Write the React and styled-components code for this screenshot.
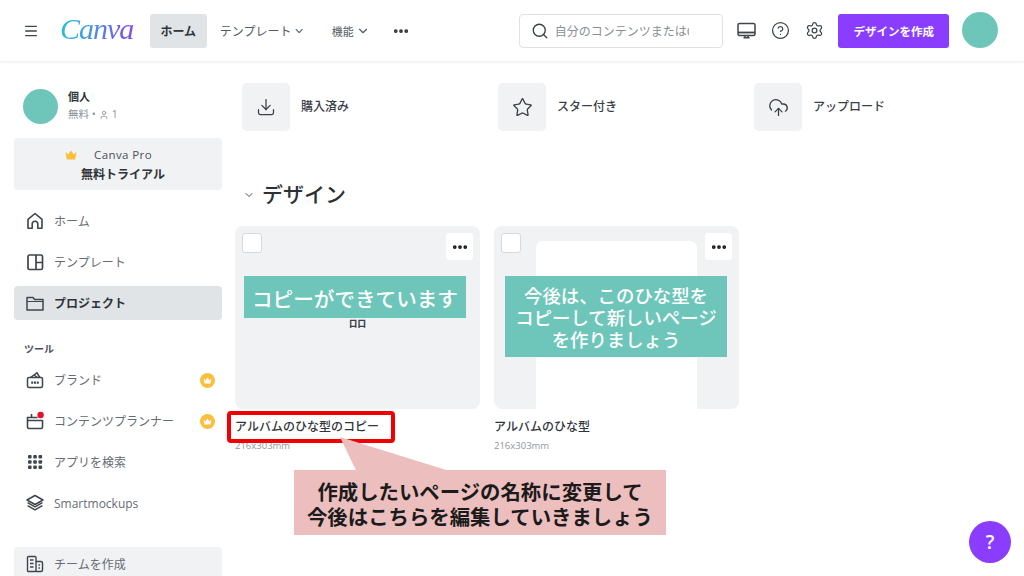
import React from "react";
import styled, { createGlobalStyle } from "styled-components";
import {
  ChevronDown,
  CircleHelp,
  CloudUpload,
  Download,
  Ellipsis,
  Menu,
  Search,
  Settings,
  Star,
  User,
} from "lucide-react";

const GlobalStyle = createGlobalStyle`
  html, body {
    margin: 0;
    height: 100%;
    overflow: hidden;
    background: #ffffff;
  }
  body {
    font-family: "Open Sans", "Noto Sans CJK JP", sans-serif;
    color: #3a4048;
  }
  * {
    box-sizing: border-box;
  }
`;

const Page = styled.div`
  position: relative;
  width: 1024px;
  height: 576px;
  overflow: hidden;
`;

const Header = styled.header`
  display: flex;
  align-items: center;
  height: 61px;
  padding: 0 26px 0 23px;
  box-shadow: 0 1px 3px rgba(30, 40, 60, 0.1);
`;

const IconButton = styled.span`
  display: flex;
  color: #3f454d;
`;

const Logo = styled.span`
  margin: -3px 0 0 21px;
  width: 90px;
  font-family: "Liberation Serif", serif;
  font-style: italic;
  font-size: 30px;
  line-height: 40px;
  letter-spacing: -1px;
  background: linear-gradient(100deg, #1fc4d4 0%, #3f9fe0 30%, #7d4df0 75%);
  -webkit-background-clip: text;
  background-clip: text;
  color: transparent;
`;

const TopLink = styled.span`
  display: flex;
  align-items: center;
  justify-content: ${(p) => (p.$start ? "flex-start" : "center")};
  gap: 2px;
  height: 34px;
  flex: none;
  font-size: ${(p) => p.$size || 12}px;
  color: #555b63;
  margin-right: ${(p) => p.$after || 0}px;
  width: ${(p) => p.$width}px;
  white-space: nowrap;
`;

const ActiveLink = styled(TopLink)`
  background: #e1e4e7;
  border-radius: 3px;
  color: #2f343a;
  font-weight: 700;
`;

const SearchBox = styled.div`
  display: flex;
  align-items: center;
  gap: 6px;
  width: 205px;
  height: 34px;
  margin-left: 109px;
  padding: 0 0 0 11px;
  border: 1px solid #dfe1e4;
  border-radius: 4px;
  font-size: 12px;
  color: #8a9097;
  overflow: hidden;
  white-space: nowrap;

  svg {
    flex: none;
    color: #3a4048;
  }
`;

const SearchText = styled.span`
  display: block;
  width: 134px;
  overflow: hidden;
`;

const HeaderIcons = styled.div`
  display: flex;
  align-items: center;
  gap: 15px;
  margin: 0 14px 0 14px;
  color: #3f454d;
`;

const CreateButton = styled.span`
  display: flex;
  align-items: center;
  justify-content: center;
  width: 111px;
  height: 34px;
  border-radius: 3px;
  background: #8b3dff;
  color: #ffffff;
  font-size: 11.5px;
  font-weight: 700;
`;

const Avatar = styled.span`
  display: block;
  flex: none;
  width: ${(p) => p.$size}px;
  height: ${(p) => p.$size}px;
  border-radius: 50%;
  background: #6ec6bb;
`;

const HeaderAvatar = styled(Avatar)`
  margin: -2px 0 0 13px;
`;

const Body = styled.div`
  display: flex;
`;

const Sidebar = styled.aside`
  flex: none;
  width: 235px;
  padding: 28px 13px 0 14px;
`;

const Profile = styled.div`
  display: flex;
  align-items: center;
  gap: 10px;
  padding-left: 9px;
  height: 35px;
`;

const ProfileName = styled.div`
  font-size: 11px;
  line-height: 16px;
  font-weight: 700;
  color: #2f343a;
`;

const ProfileMeta = styled.div`
  display: flex;
  align-items: center;
  gap: 3px;
  font-size: 10.5px;
  line-height: 19px;
  color: #8a9097;
`;

const ProBox = styled.div`
  height: 52px;
  margin: 14px 0;
  padding-top: 8px;
  border-radius: 4px;
  background: #f1f2f4;
  text-align: center;
`;

const ProRow = styled.div`
  display: flex;
  align-items: center;
  gap: 17px;
  padding-left: 51px;
  font-size: 11.5px;
  line-height: 18px;
  letter-spacing: 0.4px;
  color: #4a5058;
`;

const ProCta = styled.div`
  padding-left: 10px;
  font-size: 12px;
  line-height: 22px;
  font-weight: 700;
  color: #2f343a;
`;

const NavList = styled.nav`
  display: flex;
  flex-direction: column;
  gap: 7px;
`;

const NavItem = styled.div`
  display: flex;
  align-items: center;
  gap: 9px;
  height: 34px;
  padding: 0 7px 0 11px;
  border-radius: 4px;
  font-size: 12px;
  font-weight: ${(p) => (p.$active ? 700 : 400)};
  color: ${(p) => (p.$active ? "#2f343a" : "#666c74")};
  background: ${(p) => (p.$active ? "#e1e4e7" : p.$soft ? "#f1f2f4" : "transparent")};

  svg {
    flex: none;
    color: #3f454d;
  }
`;

const NavLabel = styled.span`
  flex: 1;
`;

const ToolsTitle = styled.div`
  margin: 21px 0 6px 10px;
  font-size: 10px;
  line-height: 16px;
  font-weight: 700;
  color: #4a5058;
`;

const TeamItem = styled(NavItem)`
  margin-top: 27px;
`;

const Main = styled.main`
  flex: 1;
  padding-top: 22px;
`;

const Shortcuts = styled.div`
  display: grid;
  grid-template-columns: repeat(3, 256px);
  padding-left: 7px;
`;

const Shortcut = styled.div`
  display: flex;
  align-items: center;
  gap: 11px;
  font-size: 12px;
  line-height: 46px;
  font-weight: 500;
  color: #3a4048;
`;

const ShortcutTile = styled.span`
  display: flex;
  align-items: center;
  justify-content: center;
  width: 48px;
  height: 48px;
  border-radius: 5px;
  background: #f1f2f4;
  color: #3a4048;
`;

const SectionTitle = styled.h2`
  display: flex;
  align-items: center;
  gap: 7px;
  height: 30px;
  margin: 47px 0 18px 8px;
  font-size: 21px;
  font-weight: 500;
  color: #2c3137;

  svg {
    margin-top: 4px;
    color: #4a5058;
  }
`;

const Cards = styled.div`
  display: flex;
  gap: 14px;
`;

const Card = styled.article`
  width: 245px;
`;

const Thumb = styled.div`
  position: relative;
  display: flex;
  justify-content: center;
  height: 183px;
  border-radius: 8px;
  background: #f1f2f4;
  overflow: hidden;
`;

const Glyph = styled.div`
  align-self: center;
  font-size: 18px;
  color: #3a4048;
`;

const Sheet = styled.div`
  align-self: flex-end;
  width: 161px;
  height: 168px;
  border-radius: 7px 7px 0 0;
  background: #ffffff;
`;

const Check = styled.span`
  position: absolute;
  top: 7px;
  left: 7px;
  width: 20px;
  height: 20px;
  border: 1px solid #d5d8dc;
  border-radius: 3px;
  background: #ffffff;
`;

const CardMenu = styled.span`
  position: absolute;
  top: 7px;
  right: 7px;
  display: flex;
  align-items: center;
  justify-content: center;
  width: 27px;
  height: 27px;
  border-radius: 3px;
  background: #ffffff;
  color: #111418;
`;

const Note = styled.div`
  position: absolute;
  top: 50px;
  left: ${(p) => p.$left}px;
  width: 222px;
  padding: ${(p) => p.$pad};
  background: #6ec6bb;
  color: #ffffff;
  font-size: ${(p) => p.$size}px;
  line-height: ${(p) => p.$line}px;
  font-weight: 500;
  text-align: center;
  white-space: nowrap;
`;

const CardName = styled.div`
  position: relative;
  margin-top: 9px;
  font-size: 12px;
  line-height: 18px;
  font-weight: 500;
  color: #2f343a;
  white-space: nowrap;
`;

const CardSize = styled.div`
  margin-top: 3px;
  font-size: 9.5px;
  line-height: 13px;
  color: #92979e;
`;

const RedFrame = styled.span`
  position: absolute;
  top: -7px;
  left: -8px;
  width: 168px;
  height: 32px;
  border: 4px solid #f20000;
  border-radius: 4px;
`;

const CalloutTail = styled.svg`
  position: absolute;
  left: 336px;
  top: 436px;
`;

const Callout = styled.div`
  position: absolute;
  left: 294px;
  top: 470px;
  width: 372px;
  height: 65px;
  padding-top: 10px;
  background: #ecbfbe;
  color: #1b1b1b;
  font-size: 20.4px;
  line-height: 25px;
  font-weight: 700;
  text-align: center;
  white-space: nowrap;
`;

const HelpBubble = styled.span`
  position: absolute;
  left: 969px;
  top: 521px;
  display: flex;
  align-items: center;
  justify-content: center;
  width: 42px;
  height: 42px;
  border-radius: 50%;
  background: #8b3dff;
  color: #ffffff;
  font-size: 19px;
  font-weight: 600;
`;

const HomeIcon = () => (
  <svg width="20" height="20" viewBox="0 0 20 20" fill="none" stroke="currentColor" strokeWidth="1.6" strokeLinejoin="round">
    <path d="M10 2.5 3 8.4V17.2H7.2V13a2.8 2.8 0 0 1 5.6 0V17.2H17V8.4Z" />
  </svg>
);

const TemplateIcon = () => (
  <svg width="20" height="20" viewBox="0 0 20 20" fill="none" stroke="currentColor" strokeWidth="1.7">
    <rect x="3" y="3" width="14.5" height="14.5" rx="1.5" />
    <path d="M11 3v14.5M11 10.5h6.5" />
  </svg>
);

const FolderIcon = () => (
  <svg width="20" height="20" viewBox="0 0 20 20" fill="none" stroke="currentColor" strokeWidth="1.5" strokeLinejoin="round">
    <path d="M2 4.5h6l1.6 2H18v10.5H2Z" />
    <path d="M2 8.5h16" strokeWidth="1" />
  </svg>
);

const BrandIcon = () => (
  <svg width="20" height="20" viewBox="0 0 20 20" fill="none" stroke="currentColor" strokeWidth="1.5">
    <rect x="2.5" y="7.5" width="15" height="10" rx="1.5" />
    <path d="M5.5 7.5 12 2.8l2.8 4.7M9 5l3.5 2.5" />
    <path d="M6.2 12.6h7.6" strokeWidth="2.2" strokeDasharray="2 0.8" />
  </svg>
);

const PlannerIcon = () => (
  <svg width="20" height="20" viewBox="0 0 20 20" fill="none" stroke="currentColor" strokeWidth="1.6">
    <path d="M17.5 9V16a1.5 1.5 0 0 1-1.5 1.5H4A1.5 1.5 0 0 1 2.5 16V6.5H12.5" />
    <path d="M2.5 9.5h15M6.5 3v4" />
    <circle cx="15.6" cy="4" r="3.2" fill="#e8112d" stroke="none" />
  </svg>
);

const AppsIcon = () => (
  <svg width="20" height="20" viewBox="0 0 20 20" fill="currentColor">
    {[3, 8.25, 13.5].map((y) =>
      [3, 8.25, 13.5].map((x) => <rect key={`${x}-${y}`} x={x} y={y} width="3.6" height="3.6" rx="1" />)
    )}
  </svg>
);

const StackIcon = () => (
  <svg width="20" height="20" viewBox="0 0 20 20" fill="none" stroke="currentColor" strokeWidth="1.5" strokeLinejoin="round">
    <path d="M10 2.5 18 7l-8 4.5L2 7Z" />
    <path d="M2.6 9.6 10 13.8l7.4-4.2" />
    <path d="M2.6 12.6 10 16.8l7.4-4.2" />
  </svg>
);

const TeamIcon = () => (
  <svg width="20" height="20" viewBox="0 0 20 20" fill="none" stroke="currentColor" strokeWidth="1.4">
    <rect x="2.5" y="2.5" width="8.5" height="15" rx="1" />
    <path d="M11 7.5h5a1.5 1.5 0 0 1 1.5 1.5v7a1.5 1.5 0 0 1-1.5 1.5h-5" />
    <path d="M5 6h3.5M5 9.5h3.5M5 13h3.5M13.5 11h1.5M13.5 14h1.5" />
  </svg>
);

const MonitorIcon = () => (
  <svg width="19" height="19" viewBox="0 0 19 19" fill="none" stroke="currentColor" strokeWidth="1.5">
    <rect x="1" y="2.5" width="17" height="12" rx="1.5" />
    <path d="M1 11.5h17" strokeWidth="1.8" />
    <path d="M6.5 16.8h6M8 15v1.5M11 15v1.5" />
  </svg>
);

const CrownBadge = () => (
  <svg width="15" height="15" viewBox="0 0 15 15">
    <circle cx="7.5" cy="7.5" r="7.5" fill="#fbbf3d" />
    <path d="M3.6 5.6 5.6 7.4 7.5 4.4 9.4 7.4 11.4 5.6 10.4 10.4H4.6Z" fill="#ffffff" />
  </svg>
);

const Crown = () => (
  <svg width="12" height="10" viewBox="0 0 12 10">
    <path d="M0.5 2 3.2 4.6 6 0.5 8.8 4.6 11.5 2 10.2 9.5H1.8Z" fill="#fbbf3d" />
  </svg>
);

const navTop = [
  { label: "ホーム", icon: <HomeIcon /> },
  { label: "テンプレート", icon: <TemplateIcon /> },
  { label: "プロジェクト", icon: <FolderIcon />, active: true },
];

const navTools = [
  { label: "ブランド", icon: <BrandIcon />, pro: true },
  { label: "コンテンツプランナー", icon: <PlannerIcon />, pro: true },
  { label: "アプリを検索", icon: <AppsIcon /> },
  { label: "Smartmockups", icon: <StackIcon /> },
];

const shortcuts = [
  { label: "購入済み", icon: <Download size={20} strokeWidth={1.5} /> },
  { label: "スター付き", icon: <Star size={21} strokeWidth={1.5} /> },
  { label: "アップロード", icon: <CloudUpload size={21} strokeWidth={1.5} /> },
];

const renderNav = (item) => (
  <NavItem key={item.label} $active={item.active}>
    {item.icon}
    <NavLabel>{item.label}</NavLabel>
    {item.pro ? <CrownBadge /> : null}
  </NavItem>
);

const App = () => {
  return (
    <Page>
      <GlobalStyle />
      <Header>
        <IconButton>
          <Menu size={16} strokeWidth={2} />
        </IconButton>
        <Logo>Canva</Logo>
        <ActiveLink $width={57} $after={13}>ホーム</ActiveLink>
        <TopLink $width={86} $after={25} $start>
          テンプレート
          <ChevronDown size={14} />
        </TopLink>
        <TopLink $width={40} $after={21} $size={11}>
          機能
          <ChevronDown size={14} />
        </TopLink>
        <IconButton>
          <Ellipsis size={18} strokeWidth={3} color="#2b3036" />
        </IconButton>
        <SearchBox>
          <Search size={18} strokeWidth={1.8} />
          <SearchText>自分のコンテンツまたはCanvaのコンテンツを検索</SearchText>
        </SearchBox>
        <HeaderIcons>
          <MonitorIcon />
          <CircleHelp size={19} strokeWidth={1.6} />
          <Settings size={19} strokeWidth={1.6} />
        </HeaderIcons>
        <CreateButton>デザインを作成</CreateButton>
        <HeaderAvatar $size={36} />
      </Header>
      <Body>
        <Sidebar>
          <Profile>
            <Avatar $size={35} />
            <div>
              <ProfileName>個人</ProfileName>
              <ProfileMeta>
                無料 • <User size={10} /> 1
              </ProfileMeta>
            </div>
          </Profile>
          <ProBox>
            <ProRow>
              <Crown />
              Canva Pro
            </ProRow>
            <ProCta>無料トライアル</ProCta>
          </ProBox>
          <NavList>{navTop.map(renderNav)}</NavList>
          <ToolsTitle>ツール</ToolsTitle>
          <NavList>{navTools.map(renderNav)}</NavList>
          <TeamItem $soft>
            <TeamIcon />
            <NavLabel>チームを作成</NavLabel>
          </TeamItem>
        </Sidebar>
        <Main>
          <Shortcuts>
            {shortcuts.map((item) => (
              <Shortcut key={item.label}>
                <ShortcutTile>{item.icon}</ShortcutTile>
                {item.label}
              </Shortcut>
            ))}
          </Shortcuts>
          <SectionTitle>
            <ChevronDown size={12} />
            デザイン
          </SectionTitle>
          <Cards>
            <Card>
              <Thumb>
                <Glyph>品</Glyph>
                <Check />
                <CardMenu>
                  <Ellipsis size={18} strokeWidth={3} />
                </CardMenu>
                <Note $left={9} $size={20.6} $line={26} $pad="10px 0 6px">コピーができています</Note>
              </Thumb>
              <CardName>
                アルバムのひな型のコピー
                <RedFrame />
              </CardName>
              <CardSize>216x303mm</CardSize>
            </Card>
            <Card>
              <Thumb>
                <Sheet />
                <Check />
                <CardMenu>
                  <Ellipsis size={18} strokeWidth={3} />
                </CardMenu>
                <Note $left={11} $size={18.4} $line={22} $pad="9px 0 6px">
                  今後は、このひな型を
                  <br />
                  コピーして新しいページ
                  <br />
                  を作りましょう
                </Note>
              </Thumb>
              <CardName>アルバムのひな型</CardName>
              <CardSize>216x303mm</CardSize>
            </Card>
          </Cards>
        </Main>
      </Body>
      <CalloutTail width="116" height="36" viewBox="0 0 116 36">
        <path d="M4 1 112 34.5H20Z" fill="#ecbfbe" />
      </CalloutTail>
      <Callout>
        作成したいページの名称に変更して
        <br />
        今後はこちらを編集していきましょう
      </Callout>
      <HelpBubble>?</HelpBubble>
    </Page>
  );
};

export default App;
